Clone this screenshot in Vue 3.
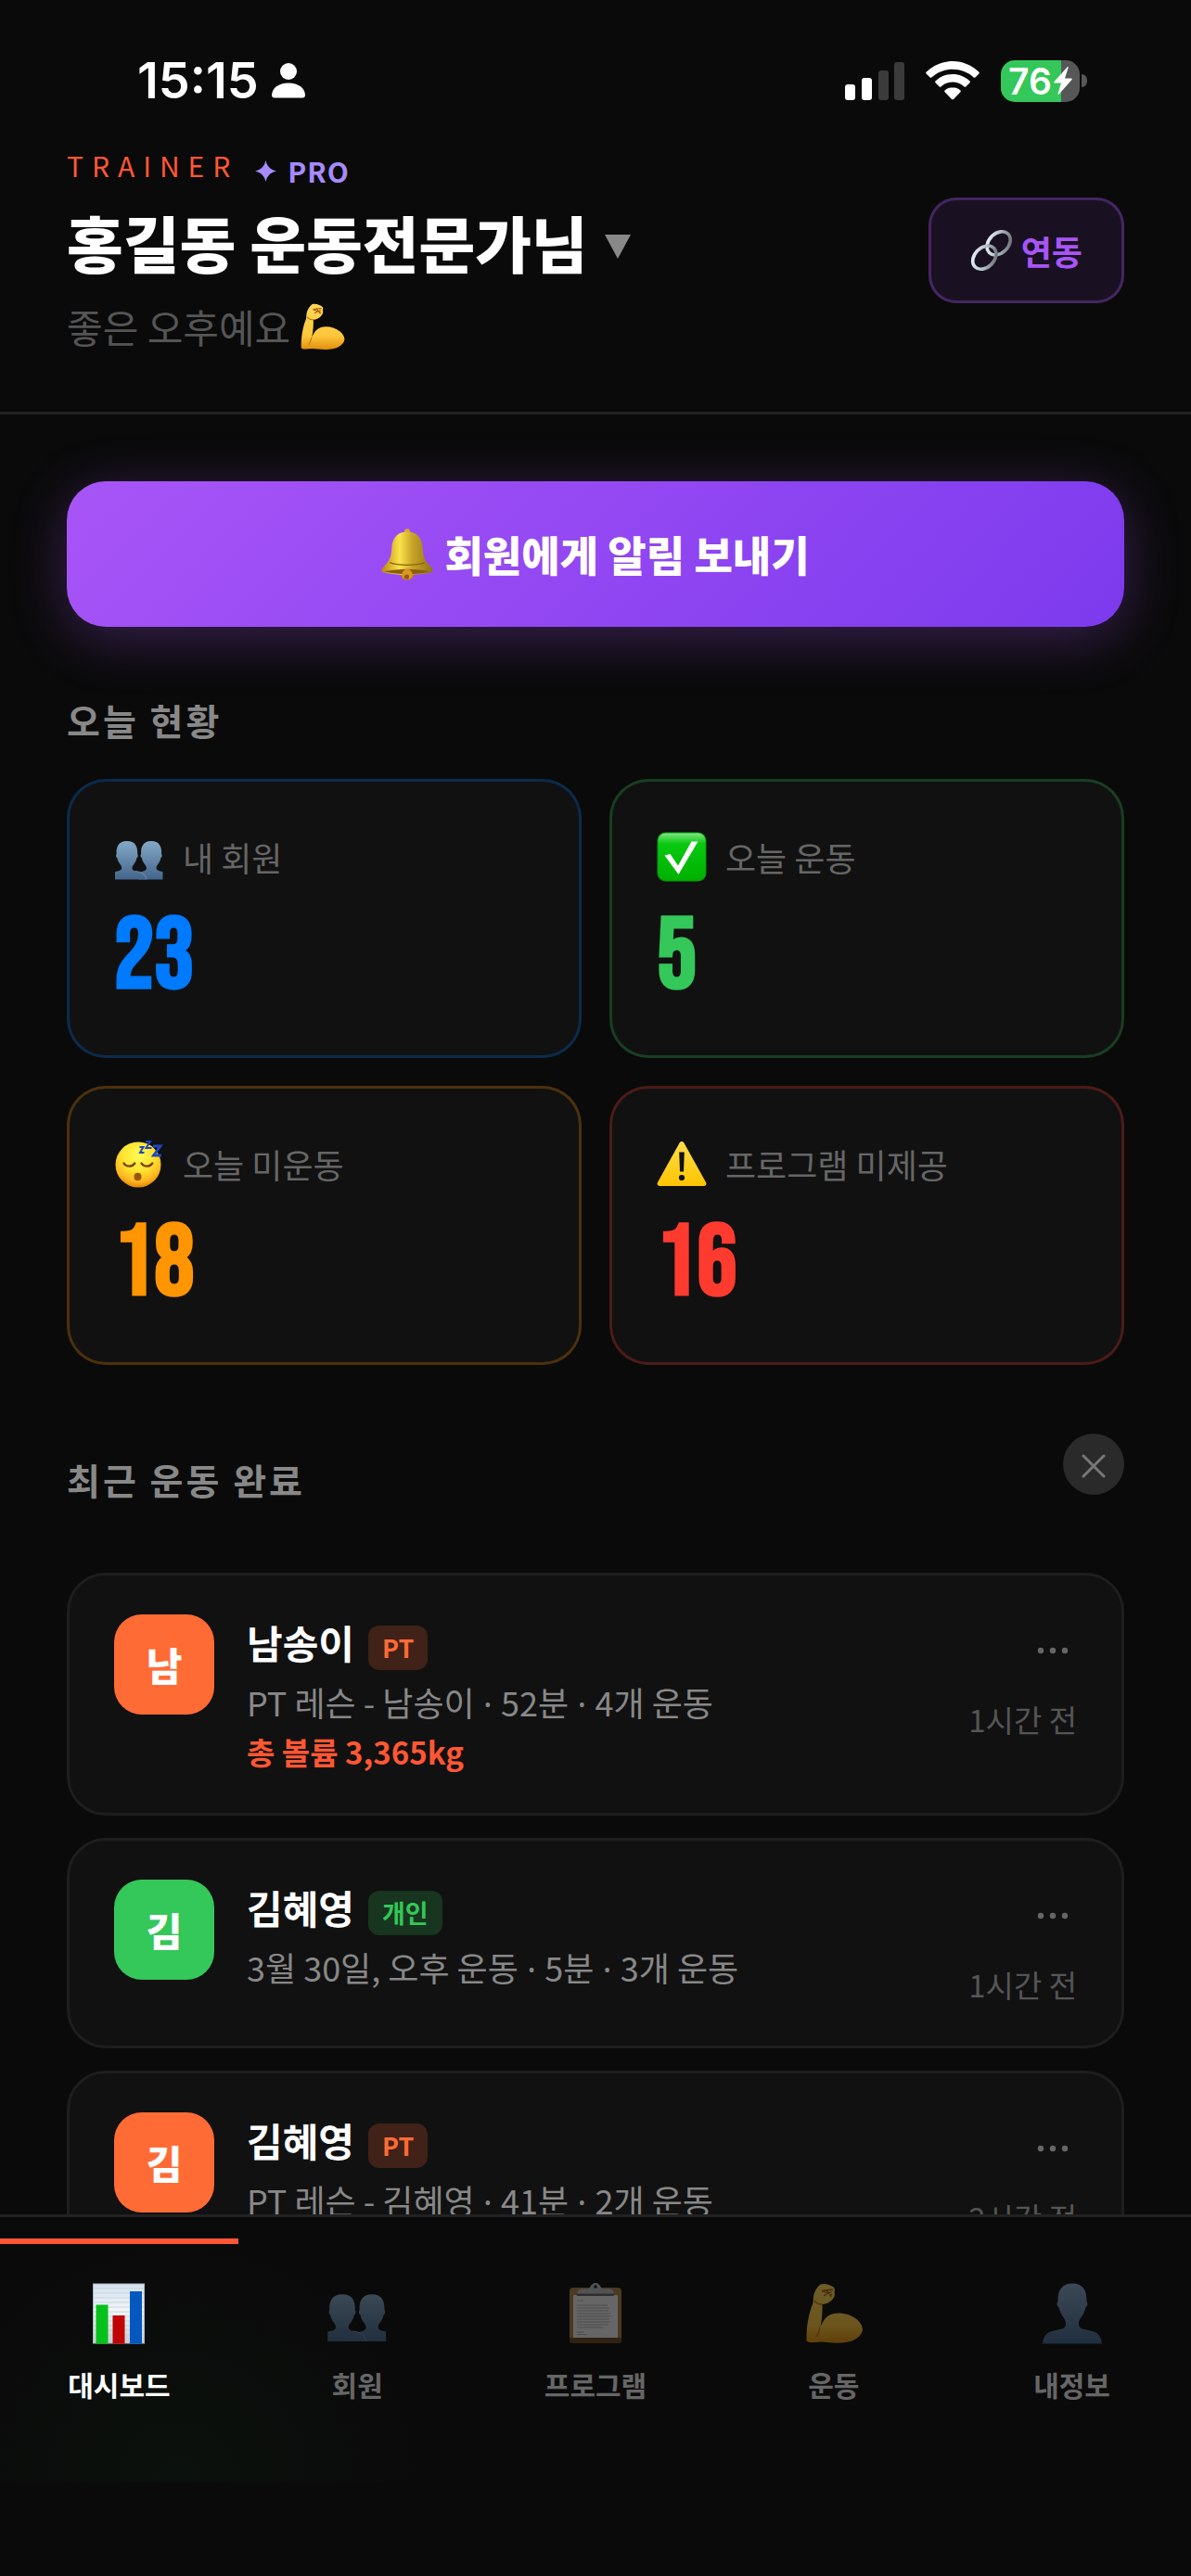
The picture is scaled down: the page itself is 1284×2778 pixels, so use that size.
<template>
  <div class="app">
    <!-- shared icon shapes -->
    <svg class="sprite" aria-hidden="true">
      <defs>
        <linearGradient id="g-person" x1="0" y1="0" x2="0" y2="1">
          <stop offset="0" stop-color="#84a9c6" />
          <stop offset="1" stop-color="#44658c" />
        </linearGradient>
        <linearGradient id="g-check" x1="0" y1="0" x2="0" y2="1">
          <stop offset="0" stop-color="#7fe683" />
          <stop offset="0.22" stop-color="#08c910" />
          <stop offset="1" stop-color="#00b000" />
        </linearGradient>
        <radialGradient id="g-face" cx="0.5" cy="0.3" r="0.72">
          <stop offset="0" stop-color="#fffb55" />
          <stop offset="0.5" stop-color="#ffe22e" />
          <stop offset="0.8" stop-color="#ffb41f" />
          <stop offset="1" stop-color="#dd7e08" />
        </radialGradient>
        <linearGradient id="g-warn" x1="0" y1="0" x2="0" y2="1">
          <stop offset="0" stop-color="#ffdc4a" />
          <stop offset="1" stop-color="#ffc400" />
        </linearGradient>
        <linearGradient id="g-arm" x1="0" y1="0" x2="0" y2="1">
          <stop offset="0" stop-color="#ffd75a" />
          <stop offset="0.7" stop-color="#ffc63a" />
          <stop offset="1" stop-color="#e08e0c" />
        </linearGradient>
        <linearGradient id="g-bell" x1="0" y1="0" x2="1" y2="0">
          <stop offset="0" stop-color="#b98514" />
          <stop offset="0.35" stop-color="#fbe44a" />
          <stop offset="0.6" stop-color="#c9a428" />
          <stop offset="1" stop-color="#8f7413" />
        </linearGradient>
        <linearGradient id="g-link" x1="0" y1="0" x2="1" y2="1">
          <stop offset="0" stop-color="#f4fbff" />
          <stop offset="0.5" stop-color="#b4c0c8" />
          <stop offset="1" stop-color="#5e5e61" />
        </linearGradient>
        <linearGradient id="g-paper" x1="0" y1="0" x2="0" y2="1">
          <stop offset="0" stop-color="#d4e2ee" />
          <stop offset="0.45" stop-color="#f1f5f8" />
          <stop offset="1" stop-color="#c9ced4" />
        </linearGradient>
      </defs>

      <symbol id="ic-members" viewBox="0 0 54 54">
        <path fill="url(#g-person)" d="M27 51.500V44c3.200-1.600 6-1.100 7.500-3.300 1-1.600.1-3.700-1.400-5.500-1.700-2.200-2.700-4.400-3.200-7-1.500-.7-1.700-3.500-.8-4.300-.4-8 2.400-13.900 11-13.900s11.400 5.900 11 13.900c.9.800.7 3.600-.8 4.300-.5 2.600-1.500 4.800-3.200 7-1.500 1.800-2.200 3.900-1 5.500 1.500 1.900 6.400 1.700 6.400 2.800v8z" />
        <path fill="url(#g-person)" d="M1 51.500v-8c0-1.100 5.100-.9 6.600-2.800 1.200-1.600.5-3.700-1-5.500-1.700-2.200-2.700-4.400-3.200-7-1.500-.7-1.700-3.500-.8-4.300C2.200 15.900 5 10 13.900 10s11.700 5.900 11.300 13.900c.9.800.7 3.600-.8 4.300-.5 2.600-1.500 4.800-3.200 7-1.500 1.800-2.400 3.900-1.200 5.500 1.800 2.200 5.900 1.700 9.600 3.300 3.600 1.700 5.600 4.200 6.200 7.500z" />
        <path fill="none" stroke="#7fa3bf" stroke-width="0.700" d="M23 42.500c6 .5 10.500 3 11.700 8.500" />
      </symbol>

      <symbol id="ic-check" viewBox="0 0 54 54">
        <rect x="0.500" y="0.500" width="53" height="53" rx="9" fill="#039c08" />
        <rect x="1.500" y="1.500" width="51" height="51" rx="8" fill="url(#g-check)" />
        <path fill="#fff" d="M8.500 25.500l6-1.500 8.500 12.500L37.500 10.500h7L23.500 46z" />
      </symbol>

      <symbol id="ic-sleep" viewBox="0 0 54 54">
        <circle cx="26" cy="28" r="24.500" fill="url(#g-face)" />
        <g fill="none" stroke="#7d4206" stroke-width="2.400" stroke-linecap="round">
          <path d="M10.500 26.500c2.500 4.200 9 4.200 11.800 0" />
          <path d="M29.500 26.500c2.500 4.200 9 4.200 11.800 0" />
        </g>
        <ellipse cx="25.500" cy="41" rx="4" ry="4.200" fill="#9c5404" />
        <g fill="none" stroke="#1e46c8" stroke-width="2" stroke-linejoin="miter">
          <path d="M27.500 9h4L28 15h4.500" />
          <path d="M34 3h5L34.500 10h6" />
          <path stroke-width="2.800" d="M42 8h8L42.500 18H51" />
        </g>
      </symbol>

      <symbol id="ic-warn" viewBox="0 0 54 54">
        <path fill="url(#g-warn)" d="M24.600 4.500c1.100-2 3.700-2 4.800 0l23.700 42.700c1 2-.2 3.800-2.300 3.800H3.200C1.100 51-.1 49.200.9 47.200z" />
        <path fill="#111" d="M24.200 14.500h5.600l-.8 21h-4z" />
        <circle cx="27" cy="42" r="3.100" fill="#111" />
      </symbol>

      <symbol id="ic-arm" viewBox="0 0 66 66">
        <path fill="url(#g-arm)" d="M18.500 1.600c4-1.600 11.500.3 14.800 3.600.9 1.500.6 3.200.3 4.600.7 3.200.1 5.300-2 7.700-2.500 3.400-6.800 5.200-11.200 5.600.5 7.500-.4 17.500-2 24.500 4-10 9.500-15 19.600-15C52.500 32.600 64 42 64 50.500c-1.500 9-12.500 14.300-26.500 14.300-7 0-13-1.300-18.500-1.300-5.500.3-13 1.700-15.500-.9C3.200 48 5.700 33 10.500 21.500c.5-6.500.2-13 8-19.900z" />
        <path fill="none" stroke="#c6780c" stroke-width="1.500" d="M18 48c-.8 4-1.700 7-4 10M20.500 23c-4 0-7-1-8.500-4" />
        <path fill="none" stroke="#a05c06" stroke-width="1.300" stroke-linecap="round" d="M20.500 8.500l11-1.500M20.500 9l10 3.500M22.500 13.500l8-4M25 7.500l5 7" />
      </symbol>

      <symbol id="ic-bell" viewBox="0 0 55 55">
        <circle cx="27.500" cy="3.200" r="3" fill="#d9a92b" />
        <circle cx="27.500" cy="47" r="7.500" fill="#c77f14" />
        <path fill="url(#g-bell)" d="M27.500 3.500C18 3.500 12 9 11.200 19.500 10.500 30 9.500 34 1.500 41.500 0 43.500.3 46 2 46.500c15 3.500 36 3.500 51 0 1.700-.5 2-3 .5-5-8-7.500-9-11.500-9.700-22C43 9 37 3.500 27.500 3.500z" />
        <path fill="none" stroke="#8d6510" stroke-width="1.300" d="M9 36c9 3.500 28 3.500 37 0" />
        <path fill="#8b5c0e" d="M3 45.500c15-3.500 34-3.500 49 0-15 3.800-34 3.800-49 0z" />
        <circle cx="27.500" cy="48.500" r="5.500" fill="#de9423" />
        <circle cx="27" cy="51" r="2.500" fill="#8f5b0c" />
      </symbol>

      <symbol id="ic-link" viewBox="0 0 48 48">
        <g fill="none" stroke="url(#g-link)" stroke-width="3.800">
          <ellipse cx="32" cy="16" rx="15" ry="11" transform="rotate(-45 32 16)" />
          <ellipse cx="16" cy="32" rx="15" ry="11" transform="rotate(-45 16 32)" />
        </g>
      </symbol>

      <symbol id="ic-chart" viewBox="0 0 66 66">
        <rect x="5" y="0.500" width="56" height="65" fill="#a9b8c4" />
        <rect x="6" y="1.500" width="54" height="63" fill="url(#g-paper)" />
        <path stroke="#bccbd9" stroke-width="0.700" d="M6 6h54M6 11h54M6 16h54M6 21h54M6 26h54M6 31h54M6 36h54M6 41h54M6 46h54M6 51h54M6 56h54" />
        <rect x="8.500" y="23.500" width="13" height="42" fill="#05c119" />
        <rect x="26.500" y="35" width="13" height="30.500" fill="#c00404" />
        <rect x="45" y="9" width="13" height="56.500" fill="#0458bf" />
      </symbol>

      <symbol id="ic-clipboard" viewBox="0 0 66 66">
        <rect x="5" y="5" width="56" height="60" rx="4" fill="#ae8144" />
        <path fill="#6c4a24" d="M5 59h56v3c0 2-1.500 3-3 3H8c-1.500 0-3-1-3-3z" />
        <rect x="9" y="13" width="48" height="46" fill="#efefef" />
        <rect x="13" y="11" width="40" height="3" fill="#6f665a" />
        <path fill="#b9c1c8" d="M13 11.500c.5-3.500 2.500-5 5-5h7c2.500-.5 3-6.500 8-6.500s5.500 6 8 6.500h7c2.500 0 4.500 1.500 5 5z" />
        <circle cx="33" cy="4" r="1.800" fill="#15181a" />
        <path stroke="#b0b0b0" stroke-width="1.200" d="M13 19h7M13 24h33M13 27h35M13 30h34M13 33h36M13 36h37M13 39h35M13 42h36M13 45h34M13 48h28M13 53h7M13 55.500h11" />
      </symbol>

      <symbol id="ic-profile" viewBox="0 0 66 66">
        <path fill="url(#g-person)" d="M1 65.500C2 55.500 7 52.500 15 51c7-1.200 11-2 11-7 0-5-2-5-5-11-1-2-2-4-2.300-6.500-2-1-3-5-1.200-6.500C17 8 22 .5 33 .5S49 8 48.500 20c1.800 1.500.8 5.500-1.200 6.500-.3 2.500-1.300 4.500-2.300 6.500-3 6-5 6-5 11 0 5 4 5.800 11 7 8 1.500 13 4.500 14 14.500z" />
      </symbol>
    </svg>

    <div class="statusbar">
      <div class="clock">
        <span>15:15</span>
        <svg width="36" height="38" viewBox="0 0 36 38" fill="#fff" aria-hidden="true">
          <circle cx="18" cy="9" r="9" />
          <path d="M0 34.500C.5 27 7 21.500 18 21.500S35.500 27 36 34.500c0 2-1 3-3 3H3c-2 0-3-1-3-3z" />
        </svg>
      </div>
      <div class="signals">
        <svg width="64" height="42" viewBox="0 0 64 42" aria-hidden="true">
          <rect x="0" y="25" width="11" height="17" rx="3" fill="#fff" />
          <rect x="18" y="18" width="11" height="24" rx="3" fill="#fff" />
          <rect x="36" y="10" width="11" height="32" rx="3" fill="#3b3b3b" />
          <rect x="53" y="1" width="11" height="41" rx="3" fill="#3b3b3b" />
        </svg>
        <svg width="58" height="42" viewBox="0 0 58 42" fill="#fff" aria-hidden="true">
          <path d="M29 0C18 0 8 4.500.8 11.500c-.8.800-.8 1.500 0 2.300l3.600 3.500c.7.700 1.500.7 2.200 0C12.500 11.800 20.500 8.800 29 8.800s16.500 3 22.400 8.500c.7.700 1.500.7 2.200 0l3.600-3.500c.8-.8.8-1.500 0-2.300C50 4.500 40 0 29 0z" />
          <path d="M29 14c-7 0-13.500 2.700-18.300 7.200-.8.700-.8 1.500 0 2.300l3.800 3.700c.7.700 1.400.7 2.200 0 3.300-2.900 7.600-4.600 12.300-4.600s9 1.700 12.300 4.600c.8.700 1.500.7 2.200 0l3.800-3.700c.8-.8.8-1.600 0-2.300C42.500 16.700 36 14 29 14z" />
          <path d="M29 28.300c-3.200 0-6 1.100-8.200 3-.8.800-.7 1.500 0 2.200l7 7.200c.8.800 1.600.8 2.400 0l7-7.200c.7-.7.8-1.400 0-2.200-2.200-1.900-5-3-8.200-3z" />
        </svg>
        <div class="battery">
          <div class="cell">
            <span>76</span>
            <svg width="20" height="30" viewBox="0 0 20 30" fill="#fff" aria-hidden="true">
              <path d="M14.500.5L.5 16c-.5.700-.3 1.500.6 1.500h6.900L4.500 29c-.2.900.5 1.200 1.200.5L19.500 14c.5-.7.300-1.500-.6-1.500H12L15.700 1c.3-.9-.5-1.200-1.200-.5z" />
            </svg>
          </div>
          <i class="nub"></i>
        </div>
      </div>
    </div>

    <header class="header">
      <div class="who">
        <div class="eyebrow">
          <span class="role">TRAINER</span>
          <span class="plan">
            <svg width="23" height="23" viewBox="0 0 24 24" fill="#a78bfa" aria-hidden="true">
              <path d="M12 0c1.600 6.500 4.500 10 12 12-7.500 2-10.400 5.500-12 12C10.400 17.500 7.500 14 0 12 7.500 10 10.400 6.500 12 0z" />
            </svg>
            PRO
          </span>
        </div>
        <h1 class="name">
          홍길동 운동전문가님
          <svg width="28" height="38" viewBox="0 0 28 38" fill="#888" aria-hidden="true"><path d="M0 12h28L14 38z" /></svg>
        </h1>
        <p class="greeting">좋은 오후예요 <svg width="51" height="51" aria-hidden="true"><use href="#ic-arm" /></svg></p>
      </div>
      <button type="button" class="link-btn">
        <svg width="46" height="46" aria-hidden="true"><use href="#ic-link" /></svg>
        연동
      </button>
    </header>

    <main class="content">
      <button type="button" class="cta">
        <svg width="56" height="56" aria-hidden="true"><use href="#ic-bell" /></svg>
        회원에게 알림 보내기
      </button>

      <h2 class="section-title">오늘 현황</h2>
      <div class="stats">
        <div v-for="s in stats" :key="s.label" class="stat" :class="s.tone">
          <div class="stat-head">
            <svg width="54" height="54" aria-hidden="true"><use :href="'#ic-' + s.icon" /></svg>
            <span>{{ s.label }}</span>
          </div>
          <div class="stat-value">{{ s.value }}</div>
        </div>
      </div>

      <div class="feed-head">
        <h2 class="section-title">최근 운동 완료</h2>
        <button type="button" class="close" aria-label="닫기">
          <svg width="26" height="26" viewBox="0 0 26 26" fill="none" stroke="#777" stroke-width="3" stroke-linecap="round">
            <path d="M2 2l22 22M24 2L2 24" />
          </svg>
        </button>
      </div>

      <div class="feed">
        <article v-for="w in workouts" :key="w.id" class="workout" :class="w.kind">
          <div class="avatar">{{ w.name[0] }}</div>
          <div class="info">
            <div class="info-name">
              <strong>{{ w.name }}</strong>
              <span class="badge">{{ w.badge }}</span>
            </div>
            <div class="desc">
              <template v-for="(d, i) in w.details" :key="i"><span v-if="i" class="dot"> · </span>{{ d }}</template>
            </div>
            <div v-if="w.volume" class="volume">총 볼륨 {{ w.volume }}</div>
          </div>
          <div class="meta">
            <button type="button" class="more" aria-label="더보기">
              <svg width="34" height="8" viewBox="0 0 34 8" fill="#666">
                <circle cx="4" cy="4" r="3.200" />
                <circle cx="17" cy="4" r="3.200" />
                <circle cx="30" cy="4" r="3.200" />
              </svg>
            </button>
            <span class="ago">{{ w.ago }}</span>
          </div>
        </article>
      </div>
    </main>

    <nav class="tabs">
      <button
        v-for="t in tabs"
        :key="t.id"
        type="button"
        class="tab"
        :class="{ active: t.id === activeTab }"
        @click="activeTab = t.id"
      >
        <svg width="66" height="66" aria-hidden="true"><use :href="'#ic-' + t.icon" /></svg>
        <span>{{ t.label }}</span>
      </button>
    </nav>
  </div>
</template>

<script setup>
import { ref } from 'vue'

const activeTab = ref('dashboard')

const stats = [
  { label: '내 회원', value: 23, icon: 'members', tone: 'blue' },
  { label: '오늘 운동', value: 5, icon: 'check', tone: 'green' },
  { label: '오늘 미운동', value: 18, icon: 'sleep', tone: 'orange' },
  { label: '프로그램 미제공', value: 16, icon: 'warn', tone: 'red' }
]

const workouts = [
  { id: 1, name: '남송이', kind: 'pt', badge: 'PT', details: ['PT 레슨 - 남송이', '52분', '4개 운동'], volume: '3,365kg', ago: '1시간 전' },
  { id: 2, name: '김혜영', kind: 'solo', badge: '개인', details: ['3월 30일, 오후 운동', '5분', '3개 운동'], ago: '1시간 전' },
  { id: 3, name: '김혜영', kind: 'pt', badge: 'PT', details: ['PT 레슨 - 김혜영', '41분', '2개 운동'], ago: '2시간 전' }
]

const tabs = [
  { id: 'dashboard', label: '대시보드', icon: 'chart' },
  { id: 'members', label: '회원', icon: 'members' },
  { id: 'programs', label: '프로그램', icon: 'clipboard' },
  { id: 'workouts', label: '운동', icon: 'arm' },
  { id: 'me', label: '내정보', icon: 'profile' }
]
</script>

<style>
body {
  background: #0a0a0a;
}
</style>

<style scoped>
.app {
  display: flex;
  flex-direction: column;
  height: 100vh;
  overflow: hidden;
  background: #0a0a0a;
  color: #fff;
  font-family: "Noto Sans CJK KR", sans-serif;
}

.sprite {
  position: absolute;
  width: 0;
  height: 0;
}

svg {
  flex-shrink: 0;
}

button {
  margin: 0;
  border: 0;
  background: none;
  color: inherit;
  font-family: inherit;
  cursor: pointer;
}

h1,
h2,
p {
  margin: 0;
}

/* status bar */
.statusbar {
  display: flex;
  flex-shrink: 0;
  justify-content: space-between;
  align-items: center;
  padding: 57px 112px 39px 148px;
}

.clock {
  display: flex;
  align-items: center;
  gap: 14px;
  font: 600 54px/60px Inter, sans-serif;
}

.signals {
  display: flex;
  align-items: center;
  gap: 23px;
}

.battery {
  display: flex;
  align-items: center;
  gap: 2px;
}

.cell {
  display: flex;
  align-items: center;
  justify-content: center;
  gap: 2px;
  width: 85px;
  height: 45px;
  border-radius: 15px;
  background: linear-gradient(90deg, #34c759 76%, #575757 76%);
  font: 600 39px/45px Inter, sans-serif;
}

.nub {
  width: 6px;
  height: 14px;
  border-radius: 0 6px 6px 0;
  background: #575757;
}

/* header */
.header {
  display: flex;
  flex-shrink: 0;
  justify-content: space-between;
  align-items: center;
  padding: 4px 72px 65px;
  border-bottom: 3px solid #222;
}

.eyebrow {
  display: flex;
  gap: 18px;
  height: 42px;
  margin-bottom: 19px;
  font-size: 30px;
  line-height: 36px;
}

.role {
  color: #ff5733;
  letter-spacing: 9px;
}

.plan {
  display: flex;
  align-items: center;
  align-self: flex-end;
  gap: 12px;
  color: #a78bfa;
  font-weight: 700;
  letter-spacing: 1px;
}

.name {
  display: flex;
  align-items: center;
  gap: 18px;
  font-size: 66px;
  font-weight: 900;
  line-height: 78px;
}

.greeting {
  display: flex;
  align-items: center;
  gap: 9px;
  margin-top: 26px;
  color: #555;
  font-size: 42px;
  line-height: 54px;
}

.link-btn {
  display: flex;
  align-items: center;
  gap: 9px;
  padding: 27px 42px;
  border: 3px solid rgba(168, 85, 247, 0.3);
  border-radius: 30px;
  background: rgba(168, 85, 247, 0.1);
  color: #a855f7;
  font-size: 36px;
  font-weight: 700;
  line-height: 54px;
}

/* content */
.content {
  flex: 1;
  min-height: 0;
  overflow-y: auto;
  padding: 72px 72px 0;
  scrollbar-width: none;
}

.cta {
  display: flex;
  align-items: center;
  justify-content: center;
  gap: 12px;
  width: 100%;
  padding: 45px;
  border-radius: 42px;
  background: linear-gradient(135deg, #a855f7, #7c3aed);
  box-shadow: 0 12px 60px rgba(168, 85, 247, 0.3);
  font-size: 45px;
  font-weight: 900;
  line-height: 67px;
}

.section-title {
  margin: 72px 0 35px;
  color: #888;
  font-size: 39px;
  font-weight: 700;
  line-height: 57px;
  letter-spacing: 3px;
}

.stats {
  display: grid;
  grid-template-columns: 1fr 1fr;
  gap: 30px;
}

.stat {
  padding: 48px 48px 51px;
  border: 3px solid;
  border-radius: 42px;
  background: #111;
}

.stat-head {
  display: flex;
  align-items: center;
  gap: 20px;
  color: #666;
  font-size: 36px;
  line-height: 66px;
}

.stat-value {
  margin-top: 22px;
  font: 700 108px/108px "Bebas Neue", "Liberation Sans Narrow", sans-serif;
}

.blue { border-color: rgba(0, 122, 255, 0.25); }
.green { border-color: rgba(52, 199, 89, 0.25); }
.orange { border-color: rgba(255, 149, 0, 0.25); }
.red { border-color: rgba(255, 59, 48, 0.25); }
.blue .stat-value { color: #007aff; }
.green .stat-value { color: #34c759; }
.orange .stat-value { color: #ff9500; }
.red .stat-value { color: #ff3b30; }

/* recent workouts */
.feed-head {
  display: flex;
  justify-content: space-between;
  align-items: flex-start;
  margin: 74px 0 72px;
}

.feed-head .section-title {
  margin: 21px 0 0;
}

.close {
  display: grid;
  place-items: center;
  width: 66px;
  height: 66px;
  padding: 3px 0 0;
  border-radius: 50%;
  background: #2a2a2a;
}

.feed {
  display: flex;
  flex-direction: column;
  gap: 24px;
}

.workout {
  display: flex;
  align-items: flex-start;
  gap: 35px;
  padding: 42px 48px;
  border: 3px solid #1e1e1e;
  border-radius: 42px;
  background: #111;
}

.avatar {
  flex-shrink: 0;
  width: 108px;
  border-radius: 30px;
  font-size: 42px;
  font-weight: 900;
  line-height: 108px;
  text-align: center;
}

.info {
  flex: 1;
  min-width: 0;
}

.info-name {
  display: flex;
  align-items: flex-end;
  gap: 15px;
  height: 60px;
  margin-bottom: 4px;
  font-size: 42px;
  line-height: 60px;
}

.badge {
  padding: 0 15px;
  border-radius: 12px;
  font-size: 27px;
  font-weight: 700;
  line-height: 48px;
}

.pt .avatar { background: #ff6b35; }
.solo .avatar { background: #34c759; }
.pt .badge {
  background: rgba(255, 107, 53, 0.2);
  color: #ff6b35;
}
.solo .badge {
  background: rgba(52, 199, 89, 0.2);
  color: #34c759;
}

.desc {
  color: #888;
  font-size: 36px;
  line-height: 60px;
}

.dot {
  font-family: "Noto Sans", sans-serif;
  line-height: 1;
  white-space: pre;
}

.volume {
  color: #ff5733;
  font-size: 33px;
  font-weight: 700;
  line-height: 48px;
}

.meta {
  display: flex;
  flex-direction: column;
  align-items: flex-end;
  gap: 12px;
}

.more {
  display: flex;
  align-items: center;
  height: 77px;
  padding: 0 9px;
}

.ago {
  color: #555;
  font-size: 33px;
  line-height: 48px;
}

/* bottom tabs */
.tabs {
  display: flex;
  flex-shrink: 0;
  padding: 23px 0 186px;
  border-top: 3px solid #222;
  background: radial-gradient(circle at 15% 100%, #0b110c, #0a0a0a 260px) 0 0 / 100% 286px no-repeat #0a0a0a;
}

.tab {
  display: flex;
  flex: 1;
  flex-direction: column;
  align-items: center;
  gap: 22px;
  padding: 42px 0 0;
  border-top: 6px solid transparent;
  color: #666;
  font-size: 30px;
  font-weight: 700;
  line-height: 42px;
}

.tab svg {
  opacity: 0.4;
}

.tab.active {
  border-color: #ff5733;
  color: #fff;
}

.tab.active svg {
  opacity: 1;
}
</style>
